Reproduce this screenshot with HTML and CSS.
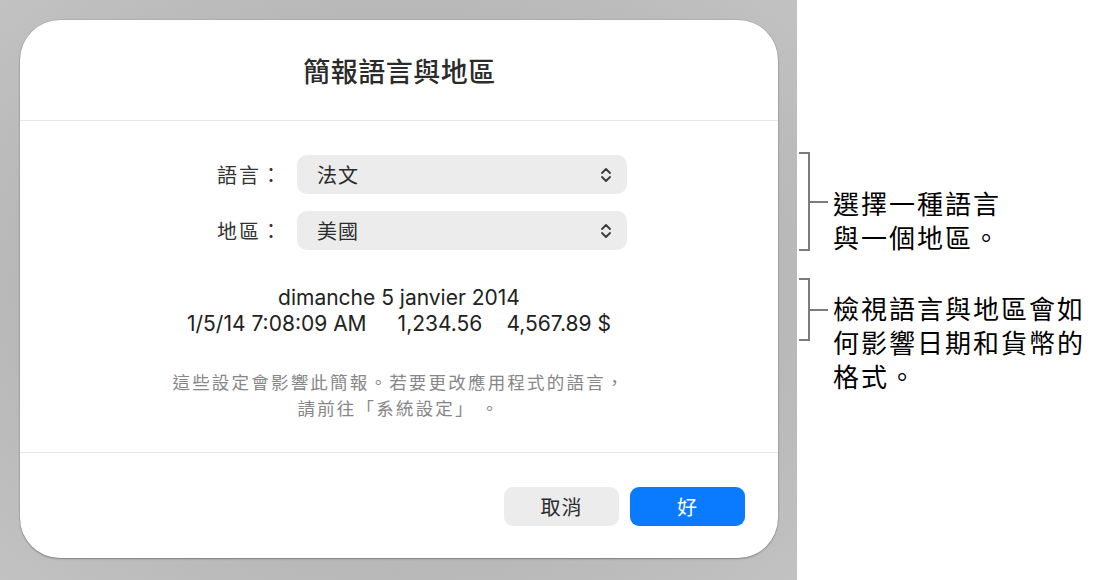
FILE: index.html
```html
<!DOCTYPE html>
<html lang="zh-Hant">
<head>
<meta charset="utf-8">
<link rel="stylesheet" href="styles.css">
</head>
<body>
<div class="page">
  <div class="desk">
    <div class="dialog">
      <div class="header">簡報語言與地區</div>
      <div class="body">
        <div class="form">
          <div class="label">語言：</div>
          <div class="popup"><span>法文</span>
            <svg class="chev" width="12" height="18" viewBox="0 0 12 18"><path d="M2 7 L6 3 L10 7 M2 11 L6 15 L10 11" fill="none" stroke="#3a3a3a" stroke-width="1.8" stroke-linecap="round" stroke-linejoin="round"/></svg>
          </div>
          <div class="label">地區：</div>
          <div class="popup"><span>美國</span>
            <svg class="chev" width="12" height="18" viewBox="0 0 12 18"><path d="M2 7 L6 3 L10 7 M2 11 L6 15 L10 11" fill="none" stroke="#3a3a3a" stroke-width="1.8" stroke-linecap="round" stroke-linejoin="round"/></svg>
          </div>
        </div>
        <div class="sample">
          <div>dimanche 5 janvier 2014</div>
          <div><span>1/5/14 7:08:09 AM</span><span class="gap1">1,234.56</span><span class="gap2">4,567.89 $</span></div>
        </div>
        <div class="note">這些設定會影響此簡報。若要更改應用程式的語言，<br>請前往「系統設定」 。</div>
      </div>
      <div class="footer">
        <button class="btn cancel">取消</button>
        <button class="btn ok">好</button>
      </div>
    </div>
  </div>
  <div class="callouts">
    <div class="callout c1">
      <div class="bracket b1"><div class="tick"></div></div>
      <div class="ctext t1">選擇一種語言<br>與一個地區。</div>
    </div>
    <div class="callout c2">
      <div class="bracket b2"><div class="tick"></div></div>
      <div class="ctext t2">檢視語言與地區會如<br>何影響日期和貨幣的<br>格式。</div>
    </div>
  </div>
</div>
</body>
</html>
```

FILE: styles.css
```css
html, body {
  margin: 0;
  padding: 0;
  background: #ffffff;
}
.page {
  display: flex;
  width: 1093px;
  height: 580px;
  overflow: hidden;
  font-family: Inter, "Noto Sans CJK TC", sans-serif;
}
.desk {
  width: 797px;
  height: 580px;
  flex: none;
  background: radial-gradient(ellipse at 50% 50%, #b3b3b3 0%, #b6b6b6 60%, #c2c2c2 100%);
  padding: 20px 0 0 20px;
  box-sizing: border-box;
}
.dialog {
  width: 758px;
  height: 538px;
  background: #ffffff;
  border-radius: 40px;
  box-shadow: 0 1px 2px rgba(0,0,0,0.28), 0 0 0 0.5px rgba(0,0,0,0.12);
  display: flex;
  flex-direction: column;
  overflow: hidden;
}
.header {
  height: 100px;
  flex: none;
  display: flex;
  align-items: center;
  justify-content: center;
  font-family: "Noto Sans CJK TC", sans-serif;
  font-size: 27px;
  font-weight: 500;
  letter-spacing: 0.5px;
  color: #2b2b2b;
  border-bottom: 1.5px solid #e6e6e6;
  padding-left: 1px;
}
.body {
  flex: 1;
  border-bottom: 1.5px solid #e6e6e6;
  padding-top: 34px;
}
.form {
  display: grid;
  grid-template-columns: 263px 330px;
  column-gap: 14px;
  row-gap: 17px;
  align-items: center;
}
.label {
  text-align: right;
  font-family: "Noto Sans CJK TC", sans-serif;
  font-size: 20px;
  letter-spacing: 2px;
  color: #333;
}
.popup {
  height: 39px;
  background: #ececec;
  border-radius: 10px;
  display: flex;
  align-items: center;
  justify-content: space-between;
  padding: 0 15px 0 20px;
  font-family: "Noto Sans CJK TC", sans-serif;
  font-size: 20px;
  letter-spacing: 1px;
  color: #2b2b2b;
}
.chev {
  display: block;
}
.sample {
  margin-top: 35px;
  text-align: center;
  font-size: 21px;
  line-height: 26px;
  color: #222;
}
.gap1 { margin-left: 31px; }
.gap2 { margin-left: 24px; }
.note {
  margin-top: 32px;
  text-align: center;
  font-family: "Noto Sans CJK TC", sans-serif;
  font-size: 17.5px;
  letter-spacing: 2.2px;
  line-height: 26px;
  color: #878787;
}
.footer {
  height: 105px;
  flex: none;
  display: flex;
  justify-content: flex-end;
  align-items: flex-start;
  padding: 34px 33px 0 0;
  box-sizing: border-box;
  gap: 11px;
}
.btn {
  width: 115px;
  height: 39px;
  border: none;
  border-radius: 9px;
  font-family: "Noto Sans CJK TC", sans-serif;
  font-size: 20px;
  letter-spacing: 1px;
  padding: 0;
}
.cancel {
  background: #ececec;
  color: #2b2b2b;
}
.ok {
  background: #0a7bff;
  color: #ffffff;
}
.callouts {
  flex: 1;
  display: flex;
  flex-direction: column;
  padding-top: 152px;
  padding-left: 2px;
}
.callout {
  display: flex;
  align-items: flex-start;
}
.c2 {
  margin-top: 24px;
}
.bracket {
  position: relative;
  width: 11px;
  border: 2px solid #7c7c7c;
  border-left: none;
  box-sizing: border-box;
  flex: none;
}
.b1 { height: 99px; }
.b2 { height: 63px; }
.tick {
  position: absolute;
  right: -20px;
  top: 50%;
  margin-top: -1px;
  width: 18px;
  height: 2px;
  background: #7c7c7c;
}
.ctext {
  margin-left: 23px;
  font-family: "Noto Sans CJK TC", sans-serif;
  font-size: 26px;
  line-height: 34px;
  color: #000;
  letter-spacing: 2px;
}
.t1 { margin-top: 34px; }
.t2 { margin-top: 13px; }
```
